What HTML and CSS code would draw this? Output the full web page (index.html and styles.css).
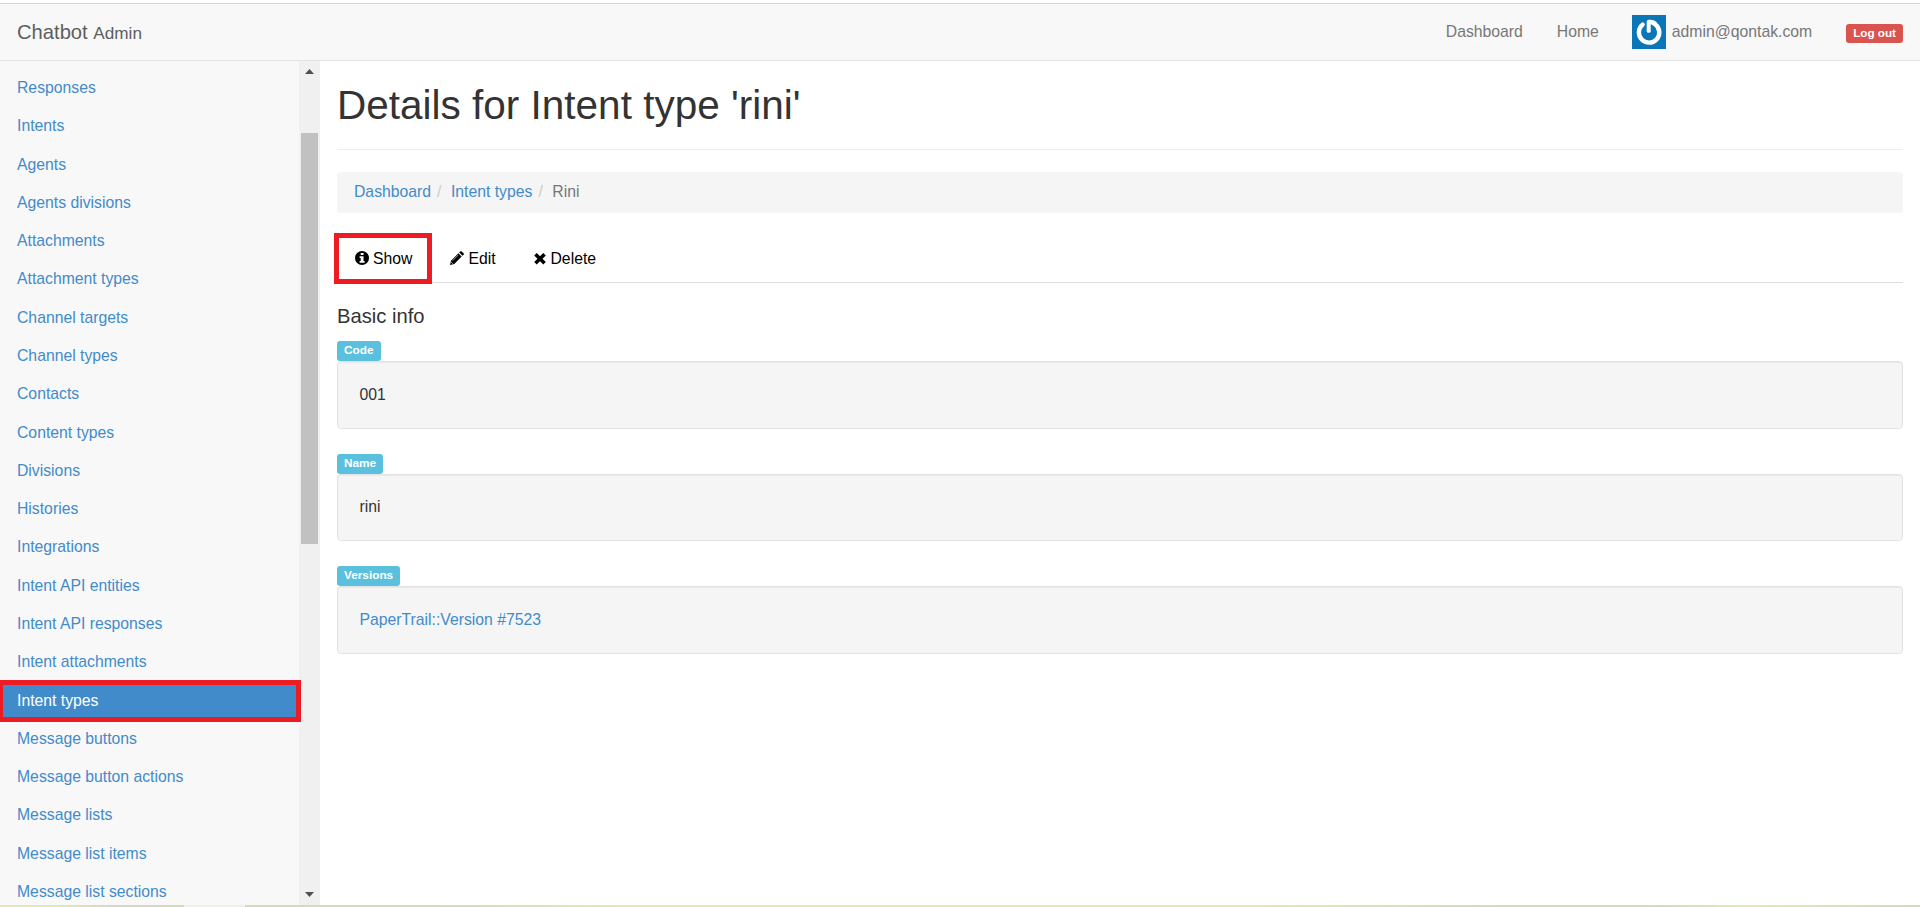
FILE: index.html
```html
<!DOCTYPE html>
<html lang="en">
<head>
<meta charset="utf-8">
<title>Details for Intent type 'rini'</title>
<link rel="stylesheet" href="styles.css">
</head>
<body>
<div class="page">
  <header class="navbar">
    <a class="brand">Chatbot <small>Admin</small></a>
    <nav class="top-links">
      <a>Dashboard</a>
      <a class="home">Home</a>
      <a class="user">
        <svg class="avatar" viewBox="0 0 34 34"><rect width="34" height="34" fill="#0a75b7"/><path d="M10.6 9.6A10.2 10.2 0 1 0 23.2 9.3" fill="none" stroke="#fff" stroke-width="4.4" stroke-linecap="round"/><path d="M18.2 4.7Q22.5 4.7 25.2 7.9L22.4 11.2 18.4 9Z" fill="#fff"/><path d="M14.7 6.6Q14.8 4.7 16.7 4.7H18.7V16.2Q18.7 17.8 16.7 17.8T14.7 16.2Z" fill="#fff"/></svg>
        <span>admin@qontak.com</span>
      </a>
      <a class="logout">Log out</a>
    </nav>
  </header>
  <div class="body">
    <aside class="sidebar">
      <ul class="menu">
        <li>Responses</li>
        <li>Intents</li>
        <li>Agents</li>
        <li>Agents divisions</li>
        <li>Attachments</li>
        <li>Attachment types</li>
        <li>Channel targets</li>
        <li>Channel types</li>
        <li>Contacts</li>
        <li>Content types</li>
        <li>Divisions</li>
        <li>Histories</li>
        <li>Integrations</li>
        <li>Intent API entities</li>
        <li>Intent API responses</li>
        <li>Intent attachments</li>
        <li class="active">Intent types</li>
        <li>Message buttons</li>
        <li>Message button actions</li>
        <li>Message lists</li>
        <li>Message list items</li>
        <li>Message list sections</li>
      </ul>
      <div class="scrollbar">
        <svg class="arrow" viewBox="0 0 9 5"><path d="M0 5 4.5 0 9 5Z"/></svg>
        <div class="track"><div class="thumb"></div></div>
        <svg class="arrow" viewBox="0 0 9 5"><path d="M0 0 4.5 5 9 0Z"/></svg>
      </div>
    </aside>
    <main class="content">
      <h1>Details for Intent type 'rini'</h1>
      <ol class="breadcrumb">
        <li><a>Dashboard</a></li><li><a>Intent types</a></li><li>Rini</li>
      </ol>
      <ul class="tabs">
        <li class="tab show"><svg class="icon" width="14" height="14" viewBox="0 0 14 14"><circle cx="7" cy="7" r="7"/><path fill="#fff" d="M5.7 2h2.8v2.1H5.7zM4.6 5.2h3.9v4.9h1.1v1.7H4.6v-1.7h1.1V6.9H4.6z"/></svg>Show</li>
        <li class="tab edit"><svg class="icon" width="14" height="14" viewBox="0 0 14 14"><path d="M0 14 1 9.7 8.4 2.3 11.7 5.6 4.3 13zM9.2 1.5 10.3.4Q11 -.2 11.7.4L13.6 2.3Q14.2 3 13.6 3.7L12.5 4.8z"/><path d="M2.5 9.7 8.3 3.9" stroke="#fff" stroke-width=".6"/><path d="M1.3 11.3 2.7 12.7" stroke="#fff" stroke-width=".8"/></svg>Edit</li>
        <li class="tab delete"><svg class="icon" width="12" height="14" viewBox="0 0 12 14"><path d="M2.7 1.9 6 5.2 9.3 1.9 11.8 4.4 8.5 7.7 11.8 11 9.3 13.5 6 10.2 2.7 13.5.2 11 3.5 7.7.2 4.4z"/></svg>Delete</li>
      </ul>
      <h4>Basic info</h4>
      <dl class="fields">
        <dt>Code</dt><dd>001</dd>
        <dt>Name</dt><dd>rini</dd>
        <dt>Versions</dt><dd><a>PaperTrail::Version #7523</a></dd>
      </dl>
    </main>
  </div>
  <footer class="edge"></footer>
</div>
</body>
</html>
```
FILE: styles.css
```css
*, *::before, *::after { box-sizing: border-box; }
body {
  margin: 0;
  font: 15.75px/22px "Liberation Sans", Arial, sans-serif;
  color: #333;
  background: #fff;
}
ul, ol, dl, dd, h1, h4 { margin: 0; padding: 0; }
ul, ol { list-style: none; }
a { color: #428bca; }

.page {
  height: 907px;
  padding-top: 3px;
  display: flex;
  flex-direction: column;
  overflow: hidden;
}
.navbar {
  flex: none;
  height: 58px;
  display: flex;
  justify-content: space-between;
  padding: 0 17px;
  background: #f8f8f8;
  border-top: 1px solid #d6d6d6;
  border-bottom: 1px solid #e4e4e4;
}
.brand { font-size: 20.2px; line-height: 56px; color: #5e5e5e; }
.brand small { font-size: 85%; }
.top-links { display: flex; align-items: center; line-height: 56px; height: 56px; }
.top-links > a, .user span { height: 56px; }
.top-links a { color: #777; }
.home { margin-left: 34px; }
.user { display: flex; align-items: center; margin-left: 33px; gap: 6px; }
.avatar { width: 34px; height: 34px; }
.top-links .logout {
  margin: 2px 0 0 34px;
  padding: 0 7px;
  font-size: 11.7px;
  font-weight: bold;
  line-height: 18px;
  height: 19px;
  color: #fff;
  background: #d9534f;
  border-radius: 3px;
}

.body { flex: 1; min-height: 0; display: flex; }
.sidebar { width: 320px; flex: none; display: flex; background: #f8f8f8; }
.menu { width: 299px; padding-top: 7.9px; }
.menu li {
  height: 38.29px;
  padding: 8.15px 17px;
  color: #428bca;
  white-space: nowrap;
}
.menu .active { position: relative; z-index: 1; color: #fff; }
.menu .active::before {
  content: "";
  position: absolute;
  z-index: -1;
  left: -2px;
  top: -1.5px;
  width: 303px;
  height: 42px;
  background: #428bca;
  border: 5px solid #ed1c24;
}
.scrollbar {
  width: 21px;
  display: flex;
  flex-direction: column;
  align-items: center;
  padding: 8px 0;
  background: #f0f0f0;
}
.arrow { width: 9px; height: 5px; fill: #505050; }
.track { flex: 1; padding-top: 59px; }
.thumb { width: 17px; height: 411px; background: #c1c1c1; }

.content { flex: 1; padding: 20px 17px 0; }
h1 {
  font-size: 40.5px;
  font-weight: 500;
  line-height: 48px;
  height: 69px;
  border-bottom: 1px solid #eee;
}
.breadcrumb {
  display: flex;
  height: 41px;
  margin-top: 22px;
  padding: 9px 17px;
  background: #f5f5f5;
  border-radius: 4px;
  color: #777;
}
.breadcrumb li + li::before { content: "/"; padding: 0 9.5px 0 6px; color: #ccc; }
.tabs {
  display: flex;
  height: 48px;
  margin: 22px 0 0;
  border-bottom: 1px solid #ddd;
  color: #000;
}
.tab { display: flex; align-items: flex-start; padding-top: 13px; }
.icon { margin: 3px 4.5px 0 0; fill: currentColor; }
.show { position: relative; width: 95px; padding-left: 18px; }
.show .icon { margin-right: 4px; }
.show::after {
  content: "";
  position: absolute;
  left: -3px;
  top: -2px;
  width: 98px;
  height: 51px;
  border: 5px solid #ed1c24;
}
.edit { padding-left: 18px; width: 102px; }
h4 { margin-top: 22px; font-size: 20.2px; font-weight: 500; line-height: 22px; height: 36px; }
dt {
  width: max-content;
  height: 20px;
  padding: 0 7px;
  font-size: 11.8px;
  font-weight: bold;
  line-height: 18px;
  color: #fff;
  background: #5bc0de;
  border-radius: 3px;
}
dd {
  height: 67.5px;
  margin-bottom: 25px;
  padding: 21.5px 21.5px 20px;
  background: #f5f5f5;
  border: 1px solid #e3e3e3;
  border-radius: 4px;
  box-shadow: inset 0 1px 1px rgba(0, 0, 0, .05);
}
.edge {
  flex: none;
  height: 2px;
  background: linear-gradient(90deg, #e3e9b0 0, #e3e9b0 60px, #d5dabb 110px, #d5dabb 184px, #f0f1e6 184px, #f0f1e6 245px, #d5dabb 245px, #d5dabb 440px, #e3e9b0 620px, #e3e9b0 1250px, #d5dabb 1500px, #d5dabb 1650px, #e3e9b0 1750px, #d5dabb 100%);
}
```
